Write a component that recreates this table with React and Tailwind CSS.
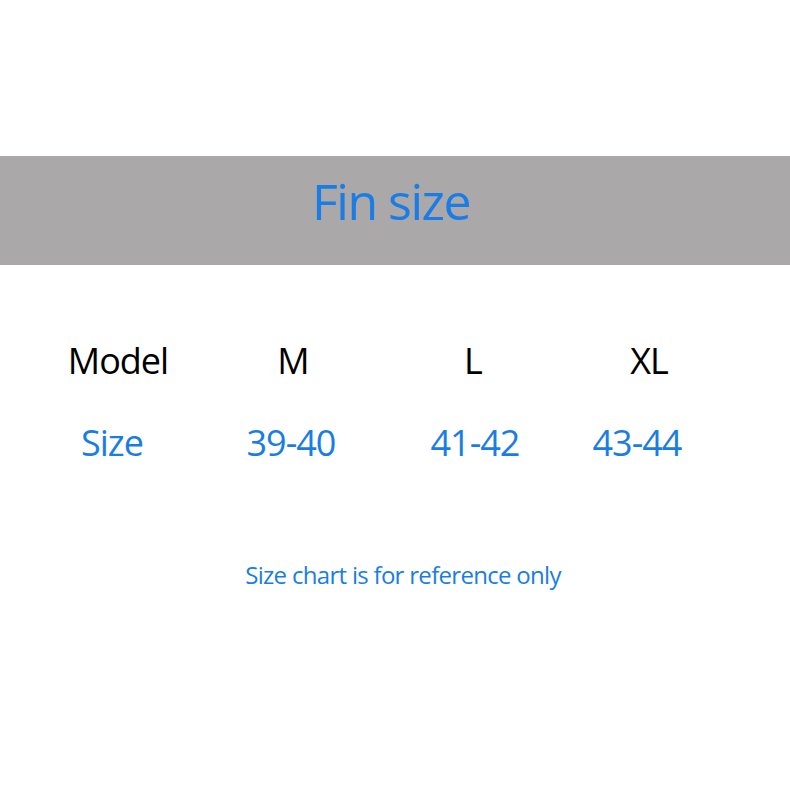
const rows = [
  { label: 'Model', values: ['M', 'L', 'XL'], color: 'text-black', shifts: ['pl-[4px]', 'pl-[2px]', 'pr-[2px]', 'pl-[12px]'] },
  { label: 'Size', values: ['39-40', '41-42', '43-44'], color: 'text-[#1a7de6]', shifts: ['pr-[8px]', 'pr-[2px]', 'pl-[2px]', 'pr-[12px]'] },
];

const App = () => {
  return (
    <div className="w-[790px] h-[790px] bg-white flex flex-col" style={{ fontFamily: '"Open Sans", "Noto Sans", sans-serif' }}>
      {/* Header band */}
      <div className="mt-[156px] h-[109px] bg-[#aaa8a9] flex items-center justify-center">
        <h1 className="text-[50px] leading-none font-medium text-[#1a7de6] tracking-[-1.5px] pb-[20px] pr-[8px]">Fin size</h1>
      </div>

      {/* Size table */}
      <div className="mt-[78px] ml-[30px] w-[690px] grid grid-cols-[172px_180px_184px_154px] gap-y-[46px]">
        {rows.map((row) => (
          <div key={row.label} className="contents">
            {[row.label, ...row.values].map((v, i) => (
              <div key={v} className={`text-center text-[36px] leading-[36px] font-medium tracking-[-1px] ${row.color} ${row.shifts[i]}`}>{v}</div>
            ))}
          </div>
        ))}
      </div>

      <p className="mt-[102px] ml-[16px] text-center text-[24px] leading-none font-medium text-[#1a7de6] tracking-[-0.7px]">
        Size chart is for reference only
      </p>
    </div>
  );
};

export default App;
